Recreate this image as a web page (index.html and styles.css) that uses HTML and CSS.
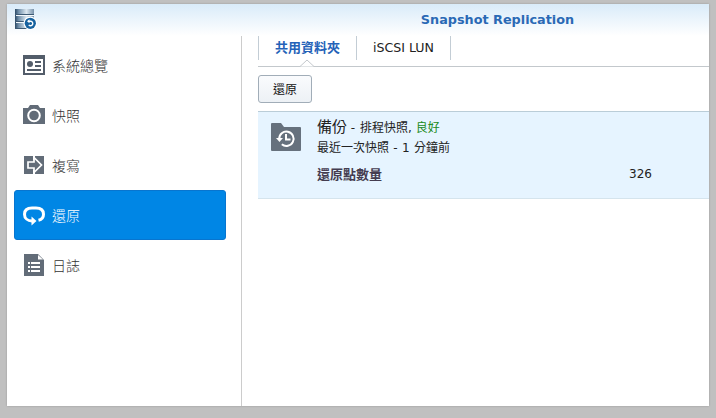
FILE: index.html
```html
<!DOCTYPE html>
<html lang="zh-Hant">
<head>
    <meta charset="utf-8">
    <title>Snapshot Replication</title>
    <link rel="stylesheet" href="styles.css">
</head>
<body>
<div class="window">
    <header>
        <svg class="logo" width="24" height="24" viewBox="0 0 24 24">
            <defs>
                <linearGradient id="disk">
                    <stop offset="0" stop-color="#2c4a66"/>
                    <stop offset=".2" stop-color="#7593ad"/>
                    <stop offset=".6" stop-color="#dbe7f0"/>
                    <stop offset="1" stop-color="#7892aa"/>
                </linearGradient>
            </defs>
            <path fill="url(#disk)" d="M1 1h19v20H1z"/>
            <path fill="#f4f9fd" d="M2 7h18v1H2zM2 14h18v1H2z"/>
            <path fill="#3d5a74" d="M1 6h19v1H1zM1 13h19v1H1zM1 20h19v1H1z"/>
            <circle cx="16.3" cy="15.3" r="6.7" fill="#fff"/>
            <circle cx="16.3" cy="15.3" r="5.6" fill="#17629f"/>
            <path fill="none" stroke="#fff" stroke-width="1.4" d="M14.500 13.300h2.300a2.200 2.200 0 1 1-2 3.500"/>
            <path fill="#fff" d="M13 13.300l2.500-2v4z"/>
        </svg>
        <h1>Snapshot Replication</h1>
    </header>
    <div class="content">
        <ul class="menu">
            <li>
                <svg width="22" height="22" viewBox="0 0 22 22">
                    <path fill="#535d6a" fill-rule="evenodd" d="M0 1h22v20H0zM2 5v14h18V5z"/>
                    <circle cx="7" cy="10" r="3" fill="#535d6a"/>
                    <path fill="#535d6a" d="M12 7h6v2h-6zM12 11h6v2h-6zM4 15h14v2H4z"/>
                </svg>
                <span>系統總覽</span>
            </li>
            <li>
                <svg width="22" height="22" viewBox="0 0 22 22">
                    <path fill="#626c78" d="M0 4h5l2-3h8l2 3h5v16H0z"/>
                    <circle cx="11" cy="11.5" r="5.8" fill="none" stroke="#fff" stroke-width="2"/>
                </svg>
                <span>快照</span>
            </li>
            <li>
                <svg width="22" height="22" viewBox="0 0 22 22">
                    <path fill="#626c78" d="M1 2h20v18H1z"/>
                    <path fill="#fff" d="M10 2h2v4h-2zM10 16h2v4h-2z"/>
                    <path fill="#626c78" stroke="#fff" stroke-width="1.700" d="M5 8h6V3.500l7.500 7.500-7.500 7.500V14H5z"/>
                </svg>
                <span>複寫</span>
            </li>
            <li class="active">
                <svg width="22" height="22" viewBox="0 0 22 22">
                    <path fill="none" stroke="#fff" stroke-width="3" d="M9 17C4.500 17 1.500 14 1.500 10.200 1.500 6 4.500 4 9 4h4c4.500 0 7.500 2 7.500 6.200 0 3-1.700 5.300-5 6"/>
                    <path fill="#fff" d="M8.500 12.500l5 4.500-5 4.500z"/>
                </svg>
                <span>還原</span>
            </li>
            <li>
                <svg width="22" height="22" viewBox="0 0 22 22">
                    <path fill="#626c78" d="M1 0h14l6 6v16H1z"/>
                    <path fill="#fff" d="M15 1v4.500h5zM5 8h2v2H5zM8 8h9v2H8zM5 12h2v2H5zM8 12h9v2H8zM5 16h2v2H5zM8 16h9v2H8z"/>
                </svg>
                <span>日誌</span>
            </li>
        </ul>
        <div class="main">
            <div class="tabs">
                <a class="tab current">共用資料夾</a>
                <a class="tab lun">iSCSI LUN</a>
                <svg class="arrow" width="14" height="8" viewBox="0 0 14 8">
                    <path fill="#fff" stroke="#c3c8cc" d="M0 7.500L7 1l7 6.500"/>
                </svg>
            </div>
            <button type="button">還原</button>
            <div class="folder">
                <svg width="30" height="28" viewBox="0 0 30 28">
                    <path fill="#66717d" d="M0 1q0-1 1-1h9l3 4h16q1 0 1 1v22q0 1-1 1H1q-1 0-1-1z"/>
                    <path fill="none" stroke="#fff" stroke-width="2" d="M8.200 16a7.200 7.200 0 1 1 2.600 5.300M15 11v5.500h4.500"/>
                    <path fill="#fff" d="M5 15h7l-3.500 4z"/>
                </svg>
                <div class="info">
                    <p class="name"><b>備份</b> - <span class="zh">排程快照</span>, <span class="ok">良好</span></p>
                    <p class="last">最近一次快照 - 1 分鐘前</p>
                    <p class="points"><strong>還原點數量</strong><span>326</span></p>
                </div>
            </div>
        </div>
    </div>
</div>
</body>
</html>
```
FILE: styles.css
```css
* {
    box-sizing: border-box;
}

body {
    margin: 0;
    height: 418px;
    padding: 4px 7px 12px;
    overflow: hidden;
    background: #c0c0c0;
    color: #222;
    font: 12px "DejaVu Sans", "Noto Sans CJK TC", sans-serif;
}

.window {
    display: flex;
    flex-direction: column;
    height: 402px;
    background: #fff;
    box-shadow: 0 0 2px #999;
}

header {
    position: relative;
    height: 32px;
    background: linear-gradient(#d9ebf9, #fff);
}

.logo {
    position: absolute;
    left: 7px;
    top: 4px;
}

header h1 {
    margin: 0;
    padding-left: 279px;
    text-align: center;
    color: #2a69b5;
    font-size: 12.800px;
    line-height: 31px;
}

.content {
    display: flex;
    flex: 1;
}

.menu {
    width: 235px;
    margin: 0;
    padding: 4px 15px 0 7px;
    border-right: 1px solid #ccc;
    list-style: none;
}

.menu li {
    display: flex;
    align-items: center;
    gap: 7px;
    height: 50px;
    padding-left: 9px;
    border-radius: 3px;
    color: #333;
    font-size: 14px;
    font-weight: 300;
}

.menu .active {
    border: 1px solid #0875cf;
    padding-left: 8px;
    background: #0086e5;
    color: #fff;
}

.main {
    flex: 1;
    padding-left: 16px;
}

.tabs {
    position: relative;
    display: flex;
    height: 31px;
    margin-bottom: 8px;
    border-bottom: 1px solid #c3c8cc;
}

.tab {
    width: 94px;
    height: 24px;
    border-right: 1px solid #c3cdd5;
    text-align: center;
    line-height: 23px;
}

.tab.current {
    width: 99px;
    border-left: 1px solid #c3cdd5;
    color: #2462b8;
    font-size: 13px;
    font-weight: bold;
}

.tab.lun {
    font-size: 12.600px;
}

.arrow {
    position: absolute;
    left: 42px;
    top: 23px;
}

button {
    display: block;
    width: 54px;
    height: 28px;
    padding: 0;
    border: 1px solid #a1adb8;
    border-radius: 3px;
    background: linear-gradient(#fafbfd, #edf1f5);
    color: #111;
    font: 12px/24px "Noto Sans CJK TC", sans-serif;
}

.folder {
    display: flex;
    height: 88px;
    margin-top: 8px;
    padding: 5px 0 0 13px;
    border-top: 1px solid #bacdd8;
    border-bottom: 1px solid #d5e4ed;
    background: #e6f4ff;
}

.folder svg {
    margin: 6px 16px 0 0;
}

.info {
    flex: 1;
}

.info p {
    margin: 0;
    height: 21px;
    line-height: 21px;
    white-space: nowrap;
}

.name b {
    font-size: 15px;
    font-weight: 400;
}

.name .zh {
    margin-left: 1px;
}

.ok {
    color: #218a21;
}

.info .last {
    word-spacing: .5px;
}

.info .points {
    display: flex;
    height: 26px;
    line-height: 31px;
}

.points strong {
    width: 312px;
    color: #443c50;
    font-size: 13px;
}
```
